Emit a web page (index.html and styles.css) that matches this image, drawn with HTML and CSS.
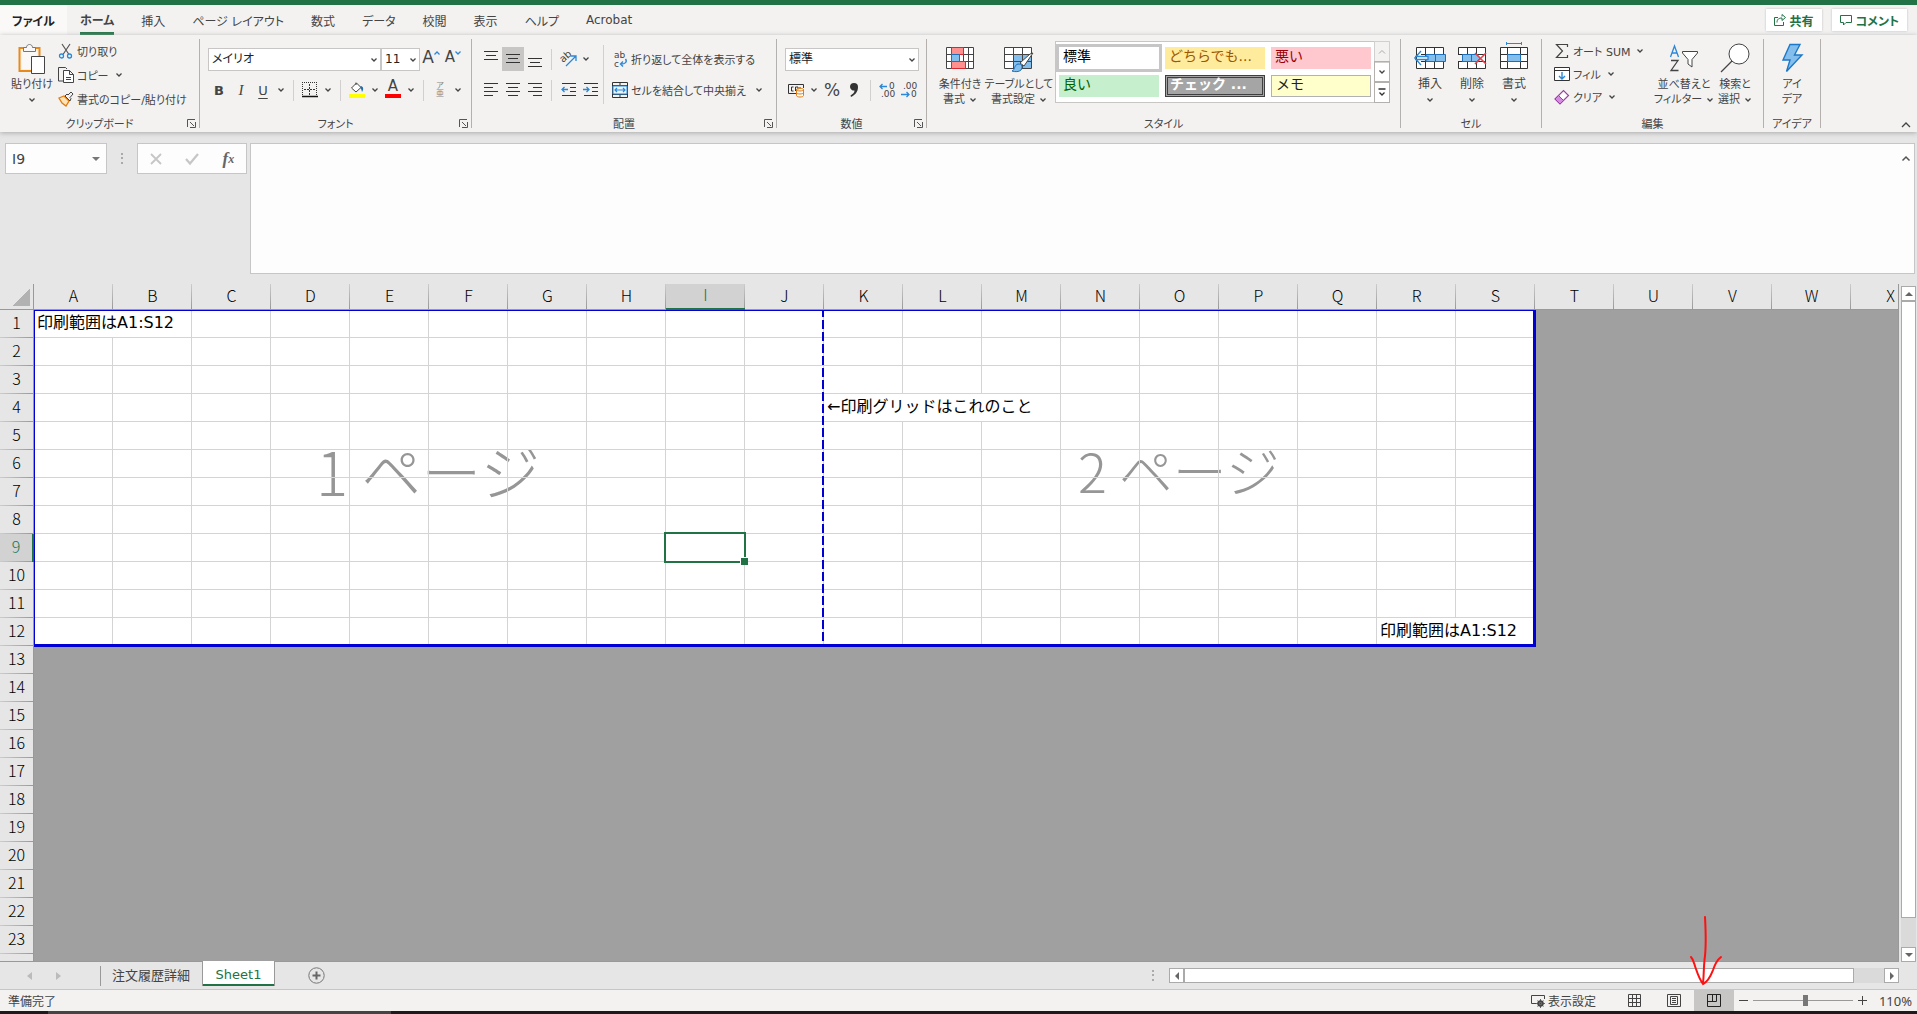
FILE: index.html
```html
<!DOCTYPE html>
<html lang="ja">
<head>
    <meta charset="UTF-8">
    <meta name="viewport" content="width=device-width, initial-scale=1.0">
    <title>Sheet1</title>
    <link rel="stylesheet" href="styles.css">
</head>
<body>

<svg class="sprite" aria-hidden="true">
    <symbol id="chev" viewBox="0 0 8 8"><path d="M1.5 2.5L4 5L6.500 2.500" fill="none" stroke="#444" stroke-width="1.300"/></symbol>
    <symbol id="launch" viewBox="0 0 9 9"><path d="M.5 8V.5H8M3 3L7 7M8.500 3V8.500H3" fill="none" stroke="#555"/></symbol>
</svg>

<nav class="tabs">
    <a href="#" class="file">ファイル</a>
    <a href="#" class="active"><span>ホーム</span></a>
    <a href="#">挿入</a>
    <a href="#">ページ レイアウト</a>
    <a href="#">数式</a>
    <a href="#">データ</a>
    <a href="#">校閲</a>
    <a href="#">表示</a>
    <a href="#">ヘルプ</a>
    <a href="#">Acrobat</a>
    <div class="tab-actions">
        <button type="button"><svg width="12" height="12" viewBox="0 0 12 12" fill="none" stroke="#217346"><path d="M4 3.500H.5V11.500H9.500V8M3 8.500C3 5 5 4 8 4V6.500L11.500 3.500L8 .5V2.500"/></svg>共有</button>
        <button type="button"><svg width="12" height="12" viewBox="0 0 12 12" fill="none" stroke="#217346"><path d="M.5 1.500H11.500V8.500H6L3.500 11V8.500H.5Z"/></svg>コメント</button>
    </div>
</nav>

<div class="ribbon">
    <section class="group clipboard">
        <div class="group-body">
            <button type="button" class="big">
                <svg width="30" height="32" viewBox="0 0 30 32" fill="none"><path d="M2.500 6H22.500V29H2.500Z" fill="#fdf1dc" stroke="#e8891c" stroke-width="2"/><path d="M5 9H20V27H5Z" fill="#faf9f8"/><path d="M6.500 9.500V5.500H9.500C9.500 1.500 15.500 1.500 15.500 5.500H18.500V9.500Z" fill="#f8f8f8" stroke="#777"/><path d="M14.500 14.500H27.500V31.500H14.500Z" fill="#fff" stroke="#444"/></svg>
                <span>貼り付け</span>
                <svg class="chev"><use href="#chev"/></svg>
            </button>
            <div class="stack">
                <button type="button"><svg width="16" height="16" viewBox="0 0 16 16" fill="none"><path d="M4 1L11 11.500M12 1L5 11.500" stroke="#555" stroke-width="1.200"/><circle cx="3.500" cy="13" r="2" stroke="#2b88d8" stroke-width="1.300"/><circle cx="11.500" cy="13" r="2" stroke="#2b88d8" stroke-width="1.300"/></svg>切り取り</button>
                <button type="button"><svg width="16" height="16" viewBox="0 0 16 16"><path d="M5 14H.5V.5H7.500L9 2" fill="none" stroke="#444"/><path d="M5.500 3.500H11.500L15.500 7.500V15.500H5.500Z M11.500 3.500V7.500H15.500M8 10.500H13M8 12.500H13" fill="#fff" stroke="#444"/></svg>コピー <svg class="chev"><use href="#chev"/></svg></button>
                <button type="button"><svg width="16" height="16" viewBox="0 0 16 16"><path d="M1 7L6 5L11 10L8 15L4 12Z" fill="#fde3b5" stroke="#e07b10" stroke-width="1.300"/><path d="M7 5L12 10L13 7.500L12 6.500L15 3L13 1L10 4L9 3Z" fill="#f3f2f1" stroke="#444"/></svg>書式のコピー/貼り付け</button>
            </div>
        </div>
        <h2>クリップボード</h2>
        <button type="button" class="launch" aria-label="クリップボード"><svg><use href="#launch"/></svg></button>
    </section>

    <section class="group font">
        <div class="group-body col">
            <div class="row">
                <div class="combo font-name"><select aria-label="フォント"><option>メイリオ</option></select><svg class="chev"><use href="#chev"/></svg></div>
                <div class="combo font-size"><select aria-label="サイズ"><option>11</option></select><svg class="chev"><use href="#chev"/></svg></div>
                <button type="button" class="tool grow-a">A<svg width="6" height="4" viewBox="0 0 6 4"><path d="M.5 3.500L3 1L5.500 3.500" fill="none" stroke="#2b88d8" stroke-width="1.300"/></svg></button>
                <button type="button" class="tool shrink-a">A<svg width="6" height="4" viewBox="0 0 6 4"><path d="M.5 .5L3 3L5.500 .5" fill="none" stroke="#2b88d8" stroke-width="1.300"/></svg></button>
            </div>
            <div class="row">
                <button type="button" class="tool bold">B</button>
                <button type="button" class="tool italic">I</button>
                <button type="button" class="tool underline">U</button>
                <button type="button" class="drop"><svg class="chev"><use href="#chev"/></svg></button>
                <i class="sep"></i>
                <button type="button" class="tool"><svg width="16" height="16" viewBox="0 0 16 16" fill="none"><path d="M0 .5H15M.5 0V14M14.500 0V14" stroke="#333" stroke-dasharray="1 1"/><path d="M7.500 2V13M2 7.500H13" stroke="#333" stroke-dasharray="2 1"/><path d="M0 14.500H16" stroke="#111" stroke-width="1.500"/></svg></button>
                <button type="button" class="drop"><svg class="chev"><use href="#chev"/></svg></button>
                <i class="sep"></i>
                <button type="button" class="tool"><svg width="16" height="16" viewBox="0 0 16 16"><path d="M7 .5V3M2.500 6L7.500 1L12 5.500L7 10Z" fill="#fff" stroke="#444"/><path d="M12 4C15 5 14.500 8 13 10C12.500 8 12 6 11 5Z" fill="#1c6fb8"/><path d="M0 12H16V16H0Z" fill="#ff0"/></svg></button>
                <button type="button" class="drop"><svg class="chev"><use href="#chev"/></svg></button>
                <button type="button" class="tool font-color">A</button>
                <button type="button" class="drop"><svg class="chev"><use href="#chev"/></svg></button>
                <i class="sep"></i>
                <button type="button" class="tool ruby"><span>ア</span><span>亜</span></button>
                <button type="button" class="drop"><svg class="chev"><use href="#chev"/></svg></button>
            </div>
        </div>
        <h2>フォント</h2>
        <button type="button" class="launch" aria-label="フォント"><svg><use href="#launch"/></svg></button>
    </section>

    <section class="group align">
        <div class="group-body">
            <div class="col">
                <div class="row">
                    <button type="button" class="tool"><svg width="14" height="16" viewBox="0 0 14 16"><path d="M0 .5H14M2 4.500H12M0 8.500H14" stroke="#333"/></svg></button>
                    <button type="button" class="tool on"><svg width="14" height="16" viewBox="0 0 14 16"><path d="M0 3.500H14M2 7.500H12M0 11.500H14" stroke="#333"/></svg></button>
                    <button type="button" class="tool"><svg width="14" height="16" viewBox="0 0 14 16"><path d="M0 7.500H14M2 11.500H12M0 15.500H14" stroke="#333"/></svg></button>
                    <i class="sep"></i>
                    <button type="button" class="tool"><svg width="18" height="16" viewBox="0 0 18 16"><text font-size="10" fill="#444" transform="translate(4 12) rotate(-42)">ab</text><path d="M7 15L16.500 5.500M12 5H17V10" fill="none" stroke="#2b88d8" stroke-width="1.300"/></svg></button>
                    <button type="button" class="drop"><svg class="chev"><use href="#chev"/></svg></button>
                </div>
                <div class="row">
                    <button type="button" class="tool"><svg width="14" height="14" viewBox="0 0 14 14"><path d="M0 .5H14M0 4.500H9M0 8.500H14M0 12.500H9" stroke="#333"/></svg></button>
                    <button type="button" class="tool"><svg width="14" height="14" viewBox="0 0 14 14"><path d="M0 .5H14M2 4.500H12M0 8.500H14M2 12.500H12" stroke="#333"/></svg></button>
                    <button type="button" class="tool"><svg width="14" height="14" viewBox="0 0 14 14"><path d="M0 .5H14M5 4.500H14M0 8.500H14M5 12.500H14" stroke="#333"/></svg></button>
                    <i class="sep"></i>
                    <button type="button" class="tool"><svg width="15" height="14" viewBox="0 0 15 14" fill="none"><path d="M1 .5H15M9 4.500H15M9 8.500H15M1 12.500H15" stroke="#333"/><path d="M7 6.500H1M3.500 4L1 6.500L3.500 9" stroke="#2b88d8" stroke-width="1.300"/></svg></button>
                    <button type="button" class="tool"><svg width="15" height="14" viewBox="0 0 15 14" fill="none"><path d="M1 .5H15M9 4.500H15M9 8.500H15M1 12.500H15" stroke="#333"/><path d="M0 6.500H6M3.500 4L6 6.500L3.500 9" stroke="#2b88d8" stroke-width="1.300"/></svg></button>
                </div>
            </div>
            <i class="sep tall"></i>
            <div class="col wide">
                <div class="row">
                    <button type="button" class="label"><svg width="16" height="18" viewBox="0 0 16 18"><text x="2" y="8" font-size="9" fill="#444">ab</text><text x="2" y="17" font-size="9" fill="#444">c</text><path d="M13.500 9C15.500 12 13.500 14 8.500 14M11 11.500L8.500 14L11 16.500" fill="none" stroke="#2b88d8" stroke-width="1.400"/></svg>折り返して全体を表示する</button>
                </div>
                <div class="row">
                    <button type="button" class="label"><svg width="16" height="16" viewBox="0 0 16 16" fill="none"><path d="M.5 .5H15.500V15.500H.5ZM.5 3.500H15.500M.5 12.500H15.500M8 .5V3.500M8 12.500V15.500" stroke="#333"/><path d="M1 4H15V12H1Z" fill="#eaf4fc" stroke="#2b88d8"/><path d="M3 8H13M5 6L3 8L5 10M11 6L13 8L11 10" stroke="#2b88d8" stroke-width="1.200"/></svg>セルを結合して中央揃え</button>
                    <button type="button" class="drop"><svg class="chev"><use href="#chev"/></svg></button>
                </div>
            </div>
        </div>
        <h2>配置</h2>
        <button type="button" class="launch" aria-label="配置"><svg><use href="#launch"/></svg></button>
    </section>

    <section class="group number">
        <div class="group-body col">
            <div class="row">
                <div class="combo format"><select aria-label="表示形式"><option>標準</option></select><svg class="chev"><use href="#chev"/></svg></div>
            </div>
            <div class="row">
                <button type="button" class="tool"><svg width="17" height="16" viewBox="0 0 17 16" fill="none"><path d="M8 11.500H.5V2.500H15.500V6" stroke="#333"/><path d="M5.500 5H3.500V9H5.500M7.500 9V5H10V8M12 5V6" stroke="#333"/><path d="M8.500 7.500C8.500 6 15.500 6 15.500 7.500V13.500C15.500 15.500 8.500 15.500 8.500 13.500ZM8.500 7.500C8.500 9.500 15.500 9.500 15.500 7.500M8.500 10.500C8.500 12.500 15.500 12.500 15.500 10.500" fill="#fff" stroke="#e07b10"/></svg></button>
                <button type="button" class="drop"><svg class="chev"><use href="#chev"/></svg></button>
                <button type="button" class="tool percent">%</button>
                <button type="button" class="tool"><svg width="8" height="14" viewBox="0 0 8 14"><path d="M0 4A4 4 0 0 1 8 4C8 9 5 12 1 14L.5 12.500C3 11 4.500 9.500 4.500 7.500A4 4 0 0 1 0 4Z" fill="#333"/></svg></button>
                <i class="sep"></i>
                <button type="button" class="tool"><svg width="16" height="16" viewBox="0 0 16 16"><text x="10" y="7" font-size="9" fill="#444">0</text><text x="2" y="15" font-size="9" fill="#444">.00</text><path d="M8 4.500H1M3.500 2L1 4.500L3.500 7" fill="none" stroke="#2b88d8" stroke-width="1.300"/></svg></button>
                <button type="button" class="tool"><svg width="16" height="16" viewBox="0 0 16 16"><text x="2" y="7" font-size="9" fill="#444">.00</text><text x="10" y="15" font-size="9" fill="#444">0</text><path d="M0 12.500H8M5.500 10L8 12.500L5.500 15" fill="none" stroke="#2b88d8" stroke-width="1.300"/></svg></button>
            </div>
        </div>
        <h2>数値</h2>
        <button type="button" class="launch" aria-label="数値"><svg><use href="#launch"/></svg></button>
    </section>

    <section class="group styles">
        <div class="group-body">
            <button type="button" class="big cond">
                <svg width="28" height="24" viewBox="0 0 28 24"><path d="M.5 1.500H27.500V22.500H.5ZM.5 8.500H27.500M.5 15.500H27.500M5.500 1V22M22.500 1V22M17.500 1V22" fill="#fff" stroke="#444"/><path d="M5.500 1.500H17.500V8.500H5.500ZM5.500 15.500H19.500V22.500H5.500Z" fill="#ff9090" stroke="#d8282f"/><path d="M5.500 8.500H13.500V15.500H5.500Z" fill="#83beec" stroke="#1c6fb8"/></svg>
                <span>条件付き</span><span>書式<svg class="chev"><use href="#chev"/></svg></span>
            </button>
            <button type="button" class="big table-style">
                <svg width="30" height="28" viewBox="0 0 30 28"><path d="M.5 3.500H27.500V24.500H.5Z" fill="#fff" stroke="#444"/><path d="M10 10H27V24H10Z" fill="#83beec"/><path d="M.5 10.500H27.500M.5 17.500H27.500M9.500 3V24M18.500 3V24" stroke="#444"/><path d="M29 9L20 22L16 19L26 10Z" fill="#fff" stroke="#444"/><path d="M8 27C11 26 10 21 14 20C18 20 19 23 17 26C15 28 11 28 8 27Z" fill="#83beec" stroke="#1c6fb8"/></svg>
                <span>テーブルとして</span><span>書式設定<svg class="chev"><use href="#chev"/></svg></span>
            </button>
            <div class="gallery">
                <div class="swatches">
                    <button type="button" class="sw-normal">標準</button>
                    <button type="button" class="sw-neutral">どちらでも...</button>
                    <button type="button" class="sw-bad">悪い</button>
                    <button type="button" class="sw-good">良い</button>
                    <button type="button" class="sw-check">チェック ...</button>
                    <button type="button" class="sw-memo">メモ</button>
                </div>
                <div class="gallery-nav">
                    <button type="button" aria-label="上へ" class="off"><svg width="8" height="8" viewBox="0 0 8 8"><path d="M1 5.500L4 2.500L7 5.500" fill="none" stroke="#aaa"/></svg></button>
                    <button type="button" aria-label="下へ"><svg class="chev"><use href="#chev"/></svg></button>
                    <button type="button" aria-label="その他"><svg width="8" height="9" viewBox="0 0 8 9"><path d="M.5 1H7.500M1.500 4.500L4 7L6.500 4.500" fill="none" stroke="#333" stroke-width="1.300"/></svg></button>
                </div>
            </div>
        </div>
        <h2>スタイル</h2>
    </section>

    <section class="group cells">
        <div class="group-body">
            <button type="button" class="big">
                <svg width="32" height="26" viewBox="0 0 32 26"><path d="M2.500 2.500H29.500V23.500H2.500ZM2.500 9.500H29.500M2.500 16.500H29.500M11.500 2.500V23.500M20.500 2.500V23.500" fill="#fff" stroke="#333"/><path d="M12 9.500H31.500V16.500H12Z" fill="#83beec" stroke="#1c6fb8"/><path d="M21.500 9.500V16.500" stroke="#1c6fb8"/><path d="M7 6L.8 13L7 20M1 11.500H14V14.500H1" fill="#fff" stroke="#2b88d8" stroke-width="1.300"/></svg>
                <span>挿入</span>
                <svg class="chev"><use href="#chev"/></svg>
            </button>
            <button type="button" class="big">
                <svg width="32" height="26" viewBox="0 0 32 26"><path d="M2.500 2.500H29.500V23.500H2.500ZM2.500 9.500H29.500M2.500 16.500H29.500M11.500 2.500V23.500M20.500 2.500V23.500" fill="#fff" stroke="#333"/><path d="M0 10H6V16H0Z" fill="#f3f2f1"/><path d="M6.500 9.500H21L24 13L21 16.500H6.500Z" fill="#83beec" stroke="#1c6fb8"/><path d="M15.500 9.500V16.500" stroke="#1c6fb8"/><path d="M19 8L30 19M30 8L19 19" stroke="#e8414a" stroke-width="1.600"/></svg>
                <span>削除</span>
                <svg class="chev"><use href="#chev"/></svg>
            </button>
            <button type="button" class="big">
                <svg width="28" height="32" viewBox="0 0 28 32"><path d="M.5 5.500H27.500V26.500H.5ZM.5 12.500H27.500M.5 19.500H27.500M7.500 5.500V26.500M20.500 5.500V26.500" fill="#fff" stroke="#333"/><path d="M7.500 12.500H20.500V19.500H7.500Z" fill="#83beec" stroke="#1c6fb8"/><path d="M6.500 0V3M21.500 0V3M7 1.500H21" stroke="#2b88d8"/></svg>
                <span>書式</span>
                <svg class="chev"><use href="#chev"/></svg>
            </button>
        </div>
        <h2>セル</h2>
    </section>

    <section class="group edit">
        <div class="group-body">
            <div class="stack">
                <button type="button"><svg width="16" height="16" viewBox="0 0 16 16"><path d="M13.500 4V1.500H2.500L8.500 8L2.500 14.500H13.500V12" fill="none" stroke="#444" stroke-width="1.200"/></svg>オート SUM <svg class="chev"><use href="#chev"/></svg></button>
                <button type="button"><svg width="16" height="16" viewBox="0 0 16 16"><path d="M.5 1.500H15.500V14.500H.5ZM.5 4.500H15.500" fill="#fff" stroke="#333"/><path d="M8 6V12.500M5 10L8 13L11 10" fill="none" stroke="#2b88d8" stroke-width="1.400"/></svg>フィル<svg class="chev"><use href="#chev"/></svg></button>
                <button type="button"><svg width="16" height="16" viewBox="0 0 16 16"><path d="M1 10L9.500 1.500L14.500 6.500L6 15Z" fill="#fff" stroke="#9b3fa5" stroke-width="1.200"/><path d="M1 10L4.500 6.500L9.500 11.500L6 15Z" fill="#d58be0" stroke="#9b3fa5"/></svg>クリア<svg class="chev"><use href="#chev"/></svg></button>
            </div>
            <button type="button" class="big sort">
                <svg width="30" height="28" viewBox="0 0 30 28" fill="none"><path d="M1.500 13L5.500 2L9.500 13M3 9H8" stroke="#2b88d8" stroke-width="1.300"/><path d="M2 16.500H9L2 26.500H9.500" stroke="#444" stroke-width="1.300"/><path d="M13.500 7.500H28.500V9L23 15.500V23L19 20V15.500L13.500 9Z" fill="#fff" stroke="#444"/></svg>
                <span>並べ替えと</span><span>フィルター<svg class="chev"><use href="#chev"/></svg></span>
            </button>
            <button type="button" class="big find">
                <svg width="30" height="30" viewBox="0 0 30 30"><circle cx="19" cy="11" r="10" fill="#fff" stroke="#444"/><path d="M12 18L1 29" stroke="#444" stroke-width="1.300"/></svg>
                <span>検索と</span><span>選択<svg class="chev"><use href="#chev"/></svg></span>
            </button>
        </div>
        <h2>編集</h2>
    </section>

    <section class="group idea">
        <div class="group-body">
            <button type="button" class="big">
                <svg width="22" height="30" viewBox="0 0 22 30"><path d="M9 1.500H19L13.500 12H21L5.500 28.500L9 17H2Z" fill="#83beec" stroke="#1c78c8" stroke-width="1.400"/></svg>
                <span>アイ</span><span>デア</span>
            </button>
        </div>
        <h2>アイデア</h2>
    </section>

    <button type="button" class="collapse" aria-label="リボンを折りたたむ"><svg width="10" height="6" viewBox="0 0 10 6"><path d="M1 5L5 1L9 5" fill="none" stroke="#444" stroke-width="1.300"/></svg></button>
</div>

<div class="formula-bar">
    <div class="name-box">
        <input type="text" value="I9" aria-label="名前ボックス">
        <svg width="8" height="4" viewBox="0 0 8 4"><path d="M0 0H8L4 4Z" fill="#777"/></svg>
    </div>
    <svg class="grip" width="2" height="11" viewBox="0 0 2 11"><path d="M0 0H2V2H0ZM0 4H2V6H0ZM0 9H2V11H0Z" fill="#aaa"/></svg>
    <div class="fx-buttons">
        <button type="button" aria-label="キャンセル"><svg width="12" height="12" viewBox="0 0 12 12"><path d="M1 1L11 11M11 1L1 11" stroke="#c6c6c6" stroke-width="1.800"/></svg></button>
        <button type="button" aria-label="入力"><svg width="14" height="12" viewBox="0 0 14 12"><path d="M1 6L5 10.500L13 1" fill="none" stroke="#c6c6c6" stroke-width="2.200"/></svg></button>
        <button type="button" class="fx">f<sub>x</sub></button>
    </div>
    <div class="formula">
        <textarea aria-label="数式バー"></textarea>
        <svg width="8" height="5" viewBox="0 0 8 5"><path d="M.5 4.500L4 1L7.500 4.500" fill="none" stroke="#555" stroke-width="1.500"/></svg>
    </div>
</div>

<main class="workspace">
    <div class="sheet">
        <span class="watermark page1">1 ページ</span>
        <span class="watermark page2">2 ページ</span>
        <table id="grid"></table>
        <div class="print-area"></div>
    </div>
    <div class="vscroll">
        <button type="button" aria-label="上へスクロール"><svg width="8" height="4" viewBox="0 0 8 4"><path d="M0 4H8L4 0Z" fill="#666"/></svg></button>
        <div class="thumb"></div>
        <div class="rest"></div>
        <button type="button" aria-label="下へスクロール"><svg width="8" height="4" viewBox="0 0 8 4"><path d="M0 0H8L4 4Z" fill="#666"/></svg></button>
    </div>
</main>

<div class="sheet-bar">
    <div class="sheet-nav">
        <button type="button" aria-label="前のシート"><svg width="5" height="8" viewBox="0 0 5 8"><path d="M5 0V8L0 4Z" fill="#bbb"/></svg></button>
        <button type="button" aria-label="次のシート"><svg width="5" height="8" viewBox="0 0 5 8"><path d="M0 0V8L5 4Z" fill="#bbb"/></svg></button>
    </div>
    <a href="#" class="sheet-tab">注文履歴詳細</a>
    <a href="#" class="sheet-tab active">Sheet1</a>
    <button type="button" class="add-sheet" aria-label="新しいシート"><svg width="17" height="17" viewBox="0 0 17 17"><circle cx="8.500" cy="8.500" r="7.700" fill="none" stroke="#777"/><path d="M8.500 4.500V12.500M4.500 8.500H12.500" stroke="#666" stroke-width="2"/></svg></button>
    <svg class="grip" width="2" height="11" viewBox="0 0 2 11"><path d="M0 0H2V2H0ZM0 4H2V6H0ZM0 9H2V11H0Z" fill="#aaa"/></svg>
    <div class="hscroll">
        <button type="button" aria-label="左へスクロール"><svg width="4" height="8" viewBox="0 0 4 8"><path d="M4 0V8L0 4Z" fill="#666"/></svg></button>
        <div class="thumb"></div>
        <div class="rest"></div>
        <button type="button" aria-label="右へスクロール"><svg width="4" height="8" viewBox="0 0 4 8"><path d="M0 0V8L4 4Z" fill="#666"/></svg></button>
    </div>
</div>

<footer class="status">
    <span class="ready">準備完了</span>
    <button type="button" class="display"><svg width="15" height="14" viewBox="0 0 15 14" fill="none" stroke="#444"><path d="M5 9.500H.5V1.500H13.500V5"/><circle cx="9.500" cy="9.500" r="2.500" stroke-width="1.500"/><path d="M9.500 5V14M5 9.500H14M6.500 6.500L12.500 12.500M12.500 6.500L6.500 12.500" stroke-width=".8"/></svg>表示設定</button>
    <button type="button" class="view" aria-label="標準"><svg width="13" height="13" viewBox="0 0 13 13"><path d="M.5 .5H12.500V12.500H.5ZM.5 4.500H12.500M.5 8.500H12.500M4.500 .5V12.500M8.500 .5V12.500" fill="none" stroke="#444"/></svg></button>
    <button type="button" class="view" aria-label="ページ レイアウト"><svg width="14" height="13" viewBox="0 0 14 13"><path d="M.5 .5H13.500V12.500H.5ZM3.500 2.500H10.500V10.500H3.500ZM5 4.500H9M5 6.500H9M5 8.500H9" fill="none" stroke="#444"/></svg></button>
    <button type="button" class="view on" aria-label="改ページ プレビュー"><svg width="14" height="13" viewBox="0 0 14 13"><path d="M.5 .5H13.500V12.500H.5ZM.5 7.500H9.500V.5M5.500 .5V7.500" fill="none" stroke="#222"/></svg></button>
    <button type="button" class="zoom-step" aria-label="縮小"><svg width="9" height="9" viewBox="0 0 9 9"><path d="M0 4.500H9" stroke="#444"/></svg></button>
    <input type="range" min="0" max="100" value="53" aria-label="ズーム">
    <button type="button" class="zoom-step" aria-label="拡大"><svg width="9" height="9" viewBox="0 0 9 9"><path d="M0 4.500H9M4.500 0V9" stroke="#444"/></svg></button>
    <span class="zoom">110%</span>
    <svg class="arrow" width="34" height="72" viewBox="0 0 34 72" fill="none" stroke="#f11" stroke-width="2" stroke-linecap="round"><path d="M16 2C17 20 17 35 15.500 45C14.500 54 15 60 14 68M2 42C5 45 5 49 7 54C9 60 11 65 14 69C20 66 22 60 24 55C26 49 28 45 32 42"/></svg>
</footer>
<div class="taskbar"></div>

<script>
const columns = 'ABCDEFGHIJKLMNOPQRSTUVWX'.split('');
const printCols = 19;
const printRows = 12;
const lastRow = 23;
const texts = {
    A1: { text: '印刷範囲はA1:S12', span: 2 },
    K4: { text: '←印刷グリッドはこれのこと', span: 3 },
    R12: { text: '印刷範囲はA1:S12', span: 2 }
};

let html = '<thead><tr><th class="corner"></th>';
columns.forEach(c => {
    html += `<th class="${c === 'I' ? 'current' : ''}">${c}</th>`;
});
html += '</tr></thead><tbody>';

// one extra unnumbered row fills the strip under the last full row
for (let r = 1; r <= lastRow + 1; r++) {
    html += `<tr><th class="${r === 9 ? 'current' : ''}">${r > lastRow ? '' : r}</th>`;
    if (r > printRows) {
        html += `<td class="outside" colspan="${columns.length}"></td></tr>`;
        continue;
    }
    for (let c = 0; c < printCols; c++) {
        const cell = texts[columns[c] + r];
        if (cell) {
            html += `<td colspan="${cell.span}">${cell.text}</td>`;
            c += cell.span - 1;
        } else if (columns[c] + r === 'I9') {
            html += '<td class="selected"><div class="cursor"></div></td>';
        } else {
            html += '<td></td>';
        }
    }
    html += `<td class="outside" colspan="${columns.length - printCols}"></td></tr>`;
}
document.getElementById('grid').innerHTML = html + '</tbody>';
</script>

</body>
</html>
```

FILE: styles.css
```css
* {
    box-sizing: border-box;
}

body {
    margin: 0;
    height: 100vh;
    display: flex;
    flex-direction: column;
    overflow: hidden;
    border-top: 5px solid #217346;
    background-color: #e6e6e6;
    color: #444;
    font-family: "DejaVu Sans", "Noto Sans CJK JP", sans-serif;
    font-size: 12px;
    font-feature-settings: "palt";
}

button,
input,
select,
textarea {
    font: inherit;
    font-feature-settings: inherit;
    color: inherit;
    background: none;
    border: 0;
    border-radius: 0;
    padding: 0;
    margin: 0;
}

button {
    display: flex;
    align-items: center;
    justify-content: center;
    white-space: nowrap;
    cursor: pointer;
}

svg {
    display: block;
    flex: none;
    overflow: visible;
}

.sprite {
    position: absolute;
    width: 0;
    height: 0;
}

.chev {
    width: 8px;
    height: 8px;
}

/* tabs */
.tabs {
    display: flex;
    height: 30px;
    flex: none;
    background-color: #f3f2f1;
}

.tabs a {
    display: flex;
    align-items: center;
    padding: 0 14px 0 13px;
    color: #444;
    text-decoration: none;
    white-space: nowrap;
}

.tabs .file {
    width: 67px;
    justify-content: center;
    padding: 0;
    background-color: #faf9f8;
    font-weight: bold;
    color: #222;
}

.tabs .active {
    font-weight: bold;
}

.tabs .active span {
    line-height: 22px;
    margin-top: 4px;
    border-bottom: 3px solid #217346;
}

.tab-actions {
    display: flex;
    gap: 10px;
    margin: 4px 10px 0 auto;
}

.tab-actions button {
    gap: 4px;
    height: 22px;
    padding: 0 8px;
    background-color: #fff;
    box-shadow: 0 0 2px #bbb;
    color: #217346;
    font-weight: bold;
    font-size: 12px;
}

/* ribbon */
.ribbon {
    display: flex;
    position: relative;
    z-index: 1;
    flex: none;
    height: 97px;
    padding: 4px 0;
    background-color: #f3f2f1;
    box-shadow: 0 1px 5px #aaa;
    font-size: 11px;
}

.group {
    position: relative;
    display: flex;
    flex-direction: column;
    flex: none;
    border-right: 1px solid #b3b0ad;
}

.group-body {
    display: flex;
    flex: none;
    height: 75px;
}

.group h2 {
    margin: 0;
    padding-top: 2px;
    font-size: 11px;
    font-weight: normal;
    line-height: 18px;
    text-align: center;
}

.launch {
    position: absolute;
    right: 3px;
    bottom: 0;
}

.launch svg {
    width: 9px;
    height: 9px;
}

.clipboard { width: 200px; }
.font { width: 272px; }
.align { width: 305px; }
.number { width: 150px; }
.styles { width: 474px; }
.cells { width: 141px; }
.edit { width: 222px; }
.idea { width: 57px; }

.group-body.col,
.group .col {
    display: flex;
    flex-direction: column;
    gap: 7px;
    padding: 8px 0 0 8px;
}

.row {
    display: flex;
    align-items: center;
    height: 24px;
}

.tool {
    width: 22px;
    height: 24px;
    flex: none;
}

.tool.on {
    background-color: #c8c6c4;
}

.drop {
    width: 14px;
    height: 24px;
}

.sep {
    width: 1px;
    height: 21px;
    margin: 0 5px;
    background-color: #d2d0ce;
}

.sep.tall {
    height: 59px;
    margin: 6px 0 0 2px;
}

.big {
    flex-direction: column;
    justify-content: flex-start;
    width: 42px;
    line-height: 15px;
}

.big > svg:first-child {
    height: 32px;
    margin: 3px 0;
}

.big span {
    display: flex;
    align-items: center;
    gap: 4px;
}

.big > .chev {
    margin-top: 4px;
}

.clipboard .big {
    width: 58px;
    padding-left: 6px;
}

.stack {
    display: flex;
    flex-direction: column;
}

.stack button {
    height: 24px;
    gap: 3px;
    justify-content: flex-start;
}

.stack .chev {
    margin-left: 3px;
}

.combo {
    position: relative;
    height: 23px;
    border: 1px solid #c8c6c4;
    background-color: #fff;
    font-size: 12px;
}

.combo select {
    width: 100%;
    height: 21px;
    padding-left: 3px;
    appearance: none;
    color: #222;
}

.combo .chev {
    position: absolute;
    right: 2px;
    top: 7px;
    pointer-events: none;
}

.font-name { width: 173px; }
.font-size { width: 39px; }
.format { width: 134px; }

.grow-a,
.shrink-a {
    align-items: flex-start;
    line-height: 20px;
}

.grow-a { font-size: 17px; }
.shrink-a { font-size: 15px; }

.grow-a svg,
.shrink-a svg {
    margin-top: 4px;
}

.bold {
    font-weight: bold;
    font-size: 13px;
}

.italic {
    font-family: "Liberation Serif", serif;
    font-style: italic;
    font-size: 15px;
}

.underline {
    text-decoration: underline;
    text-underline-offset: 3px;
    font-size: 13px;
}

.font-color {
    background: linear-gradient(#f00, #f00) 50% 16px / 16px 4px no-repeat;
    padding-bottom: 8px;
    font-size: 15px;
}

.ruby {
    flex-direction: column;
    font-size: 8px;
    line-height: 8px;
    color: #888;
}

.percent {
    font-size: 17px;
}

.wide .label {
    gap: 3px;
}

.wide .drop {
    margin-left: 6px;
}

.styles .cond {
    width: 50px;
    margin-left: 8px;
}

.styles .table-style {
    width: 68px;
}

.gallery {
    display: flex;
    height: 62px;
    margin: 2px 0 0 2px;
    border: 1px solid #c8c6c4;
    background-color: #fff;
}

.swatches {
    display: grid;
    grid-template-columns: repeat(3, 100px);
    grid-auto-rows: 22px;
    gap: 6px;
    padding: 5px 4px 0 3px;
}

.swatches button {
    justify-content: flex-start;
    padding: 0 0 4px 4px;
    font-size: 14px;
    font-feature-settings: normal;
    line-height: 18px;
}

.sw-normal {
    outline: 3px solid #c6c6c6;
    color: #000;
}

.sw-neutral {
    background-color: #ffeb9c;
    color: #9c5700;
}

.sw-bad {
    background-color: #ffc7ce;
    color: #9c0006;
}

.sw-good {
    background-color: #c6efce;
    color: #006100;
}

.swatches .sw-check {
    padding-left: 2px;
    border: 3px double #3f3f3f;
    background-color: #a5a5a5;
    color: #fff;
    font-weight: bold;
}

.sw-memo {
    border: 1px solid #b2b2b2;
    background-color: #ffffcc;
    color: #222;
}

.gallery-nav {
    display: flex;
    flex-direction: column;
    width: 14px;
}

.gallery-nav button {
    flex: 1;
    outline: 1px solid #b3b0ad;
}

.gallery-nav .off {
    background-color: #f3f2f1;
    outline-color: #d2d0ce;
}

.cells .group-body {
    padding-left: 8px;
}

.cells .big {
    font-size: 12px;
}

.edit .stack {
    width: 106px;
    padding-left: 12px;
}

.edit .stack button {
    height: 23px;
}

.edit .sort {
    width: 60px;
    margin-left: 6px;
}

.idea .big {
    width: 56px;
}

.collapse {
    margin: auto 6px 0 auto;
}

/* formula bar */
.formula-bar {
    display: flex;
    align-items: flex-start;
    flex: none;
    padding: 11px 2px 10px 5px;
}

.name-box,
.fx-buttons {
    display: flex;
    align-items: center;
    height: 31px;
    border: 1px solid #c6c6c6;
    background-color: #fdfdfd;
}

.name-box {
    width: 102px;
    padding: 0 6px;
}

.name-box input {
    flex: 1;
    min-width: 0;
    font-size: 14px;
}

.formula-bar .grip {
    margin: 10px 14px 0;
}

.fx-buttons {
    width: 110px;
    justify-content: space-around;
}

.fx-buttons .fx {
    font: italic bold 17px/20px "Liberation Serif", serif;
    color: #666;
}

.fx sub {
    font-size: 12px;
}

.formula {
    position: relative;
    flex: 1;
    height: 131px;
    margin-left: 3px;
    border: 1px solid #c6c6c6;
    background-color: #fdfdfd;
}

.formula textarea {
    width: 100%;
    height: 100%;
    resize: none;
}

.formula svg {
    position: absolute;
    right: 4px;
    top: 12px;
}

/* sheet */
.workspace {
    display: flex;
    flex: 1;
    min-height: 0;
    gap: 2px;
}

.sheet {
    position: relative;
    z-index: 0;
    flex: 1;
    min-width: 0;
    overflow: hidden;
    border-right: 1px solid #999;
    border-bottom: 1px solid #999;
    background: linear-gradient(#fff, #fff) 34px 26px / 1501px 336px no-repeat;
}

#grid {
    table-layout: fixed;
    width: 1930px;
    border-spacing: 0;
    font-size: 16px;
    font-feature-settings: normal;
    color: #000;
}

#grid th {
    width: 79px;
    height: 28px;
    padding: 0 0 4px;
    font-family: "Noto Sans CJK JP", sans-serif;
    font-weight: 300;
    line-height: 20px;
}

#grid thead th {
    height: 26px;
    border-bottom: 1px solid #999;
    background: linear-gradient(#ccc, #999) right / 1px 100% no-repeat #e6e6e6;
}

#grid tbody th,
#grid .corner {
    width: 34px;
    border-right: 1px solid #999;
}

#grid tbody th {
    background: linear-gradient(to right, #ccc, #999) bottom / 100% 1px no-repeat #e6e6e6;
}

#grid .corner {
    background: linear-gradient(135deg, transparent 50%, #b2b2b2 50%) 12px 4px / 18px 18px no-repeat;
}

#grid thead .current {
    border-bottom: 2px solid #217346;
    background-color: #d2d2d2;
    color: #217346;
}

#grid tbody .current {
    border-right: 2px solid #217346;
    background-color: #d2d2d2;
    color: #217346;
}

#grid td {
    height: 28px;
    padding: 0 0 2px 3px;
    border-right: 1px solid #d4d4d4;
    border-bottom: 1px solid #d4d4d4;
    line-height: 22px;
    white-space: nowrap;
}

#grid .outside {
    border: 0;
    background-color: #a0a0a0;
}

#grid .selected {
    position: relative;
}

.cursor {
    position: absolute;
    inset: -2px;
    border: 2px solid #217346;
}

.cursor::after {
    content: "";
    position: absolute;
    right: -4px;
    bottom: -4px;
    width: 7px;
    height: 7px;
    border: solid #fff;
    border-width: 1px 0 0 1px;
    background-color: #217346;
}

.print-area {
    position: absolute;
    left: 34px;
    top: 26px;
    width: 1502px;
    height: 337px;
    border: solid #0000d4;
    border-width: 1px 3px 3px 1px;
    background: repeating-linear-gradient(#0000d4 0 9px, transparent 9px 12px) 787px -3px / 2px 348px no-repeat;
}

.watermark {
    position: absolute;
    top: 146px;
    z-index: -1;
    font-family: "Noto Sans CJK JP", sans-serif;
    font-weight: 300;
    font-feature-settings: normal;
    line-height: 80px;
    white-space: nowrap;
    color: #969696;
}

.page1 {
    left: 316px;
    font-size: 60px;
}

.page2 {
    left: 1078px;
    font-size: 54px;
}

.vscroll,
.hscroll {
    display: flex;
    background-color: #dadada;
}

.vscroll {
    flex-direction: column;
    width: 15px;
    margin: 2px 1px 0 0;
}

.vscroll button,
.hscroll button {
    width: 15px;
    height: 15px;
    border: 1px solid #aaa;
    background-color: #fff;
}

.vscroll .thumb,
.hscroll .thumb {
    border: 1px solid #aaa;
    background-color: #fff;
}

.vscroll .thumb { flex: 615; }
.vscroll .rest { flex: 29; }
.hscroll .thumb { flex: 670; }
.hscroll .rest { flex: 30; }

.sheet-bar {
    display: flex;
    align-items: center;
    flex: none;
    height: 28px;
    padding-right: 18px;
    border-bottom: 1px solid #c6c6c6;
}

.sheet-nav {
    display: flex;
    gap: 24px;
    width: 101px;
    height: 20px;
    padding-left: 27px;
    border-right: 1px solid #999;
}

.sheet-tab {
    padding: 0 12px 0 11px;
    font-size: 13px;
    line-height: 24px;
    color: #444;
    text-decoration: none;
}

.sheet-tab.active {
    align-self: flex-start;
    width: 73px;
    margin-top: -1px;
    padding: 2px 0 0;
    z-index: 1;
    line-height: 23px;
    text-align: center;
    border: solid #999;
    border-width: 0 1px;
    box-shadow: inset 0 -2px #217346;
    background-color: #fff;
    color: #217346;
}

.add-sheet {
    margin-left: 33px;
}

.sheet-bar .grip {
    margin: 0 15px 0 auto;
}

.hscroll {
    width: 730px;
    max-width: 40%;
}

.status {
    position: relative;
    z-index: 2;
    display: flex;
    align-items: center;
    flex: none;
    height: 21px;
    padding-right: 5px;
    background-color: #f3f2f1;
}

.ready {
    margin: 0 auto 0 8px;
}

.display {
    gap: 2px;
    margin-right: 18px;
}

.view {
    width: 40px;
    height: 21px;
}

.view.on {
    background-color: #c8c6c4;
}

.zoom-step {
    width: 19px;
    height: 20px;
}

.status input {
    width: 100px;
    height: 12px;
    appearance: none;
    background: linear-gradient(#999, #999) center / 100% 1px no-repeat;
}

.status input::-webkit-slider-thumb {
    appearance: none;
    width: 5px;
    height: 11px;
    background-color: #777;
}

.zoom {
    margin-left: 6px;
    font-family: "Noto Sans", sans-serif;
    font-size: 13px;
    width: 34px;
    text-align: right;
}

.arrow {
    position: absolute;
    right: 194px;
    bottom: 24px;
}

.taskbar {
    flex: none;
    height: 3px;
    background: linear-gradient(to right, #1c1a1a 48px, #444 48px 391px, #1c1a1a 391px);
}
```
